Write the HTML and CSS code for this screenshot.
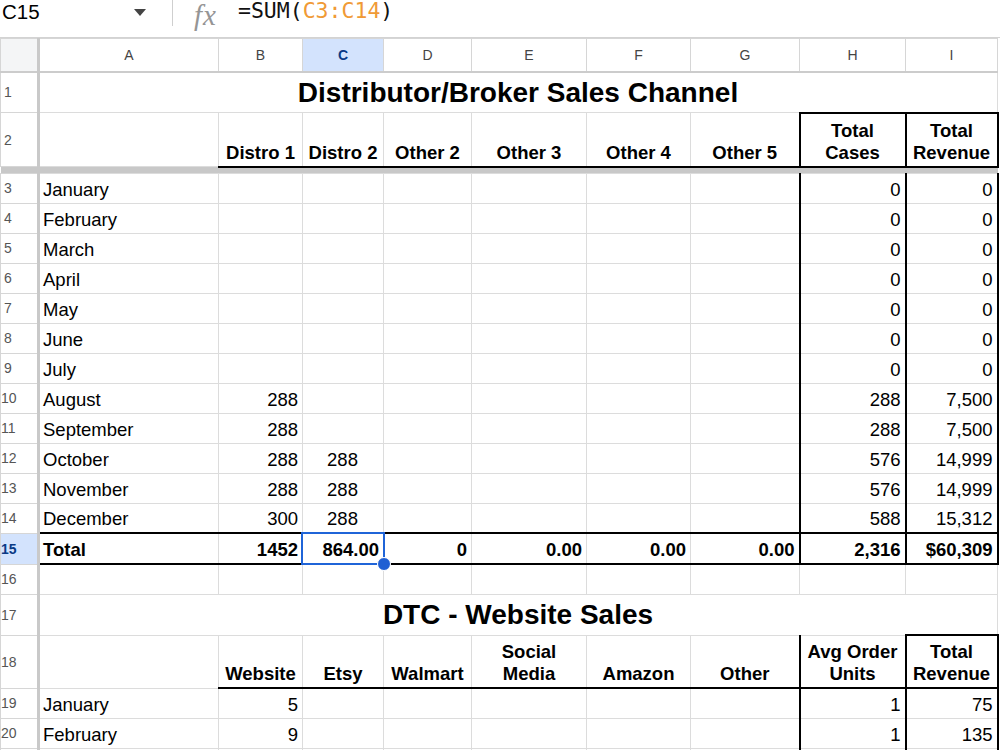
FILE: index.html
```html
<!DOCTYPE html>
<html lang="en">
<head>
    <meta charset="UTF-8">
    <title>Sales Channels</title>
    <link rel="stylesheet" href="styles.css">
</head>
<body>
    <div class="formula-bar">
        <div class="name-box">
            <span class="cell-ref">C15</span>
            <span class="caret"></span>
        </div>
        <div class="fx">fx</div>
        <div class="formula">=SUM(<span class="range">C3:C14</span>)</div>
    </div>

    <table class="sheet">
        <colgroup>
            <col class="c-rh"><col class="c-a"><col class="c-b"><col class="c-c"><col class="c-d">
            <col class="c-e"><col class="c-f"><col class="c-g"><col class="c-h"><col class="c-i">
        </colgroup>
        <tr class="col-hdr">
            <th class="corner"></th>
            <th>A</th><th>B</th><th class="active">C</th><th>D</th><th>E</th><th>F</th><th>G</th><th>H</th><th>I</th>
        </tr>

        <!-- distributor / broker block -->
        <tr class="r-title">
            <td class="rh"><span>1</span></td>
            <td colspan="9" class="title">Distributor/Broker Sales Channel</td>
        </tr>
        <tr class="r-head">
            <td class="rh"><span>2</span></td>
            <td></td>
            <td class="hd bb">Distro 1</td>
            <td class="hd bb">Distro 2</td>
            <td class="hd bb">Other 2</td>
            <td class="hd bb">Other 3</td>
            <td class="hd bb">Other 4</td>
            <td class="hd bb">Other 5</td>
            <td class="hd bb bt bl">Total<br>Cases</td>
            <td class="hd bb bt bl br">Total<br>Revenue</td>
        </tr>
        <tr class="frozen"><td colspan="10"></td></tr>
        <tr><td class="rh"><span>3</span></td><td>January</td><td></td><td></td><td></td><td></td><td></td><td></td><td class="num bl">0</td><td class="num bl br">0</td></tr>
        <tr><td class="rh"><span>4</span></td><td>February</td><td></td><td></td><td></td><td></td><td></td><td></td><td class="num bl">0</td><td class="num bl br">0</td></tr>
        <tr><td class="rh"><span>5</span></td><td>March</td><td></td><td></td><td></td><td></td><td></td><td></td><td class="num bl">0</td><td class="num bl br">0</td></tr>
        <tr><td class="rh"><span>6</span></td><td>April</td><td></td><td></td><td></td><td></td><td></td><td></td><td class="num bl">0</td><td class="num bl br">0</td></tr>
        <tr><td class="rh"><span>7</span></td><td>May</td><td></td><td></td><td></td><td></td><td></td><td></td><td class="num bl">0</td><td class="num bl br">0</td></tr>
        <tr><td class="rh"><span>8</span></td><td>June</td><td></td><td></td><td></td><td></td><td></td><td></td><td class="num bl">0</td><td class="num bl br">0</td></tr>
        <tr><td class="rh"><span>9</span></td><td>July</td><td></td><td></td><td></td><td></td><td></td><td></td><td class="num bl">0</td><td class="num bl br">0</td></tr>
        <tr><td class="rh"><span>10</span></td><td>August</td><td class="num">288</td><td></td><td></td><td></td><td></td><td></td><td class="num bl">288</td><td class="num bl br">7,500</td></tr>
        <tr><td class="rh"><span>11</span></td><td>September</td><td class="num">288</td><td></td><td></td><td></td><td></td><td></td><td class="num bl">288</td><td class="num bl br">7,500</td></tr>
        <tr><td class="rh"><span>12</span></td><td>October</td><td class="num">288</td><td class="mid">288</td><td></td><td></td><td></td><td></td><td class="num bl">576</td><td class="num bl br">14,999</td></tr>
        <tr><td class="rh"><span>13</span></td><td>November</td><td class="num">288</td><td class="mid">288</td><td></td><td></td><td></td><td></td><td class="num bl">576</td><td class="num bl br">14,999</td></tr>
        <tr><td class="rh"><span>14</span></td><td>December</td><td class="num">300</td><td class="mid">288</td><td></td><td></td><td></td><td></td><td class="num bl">588</td><td class="num bl br">15,312</td></tr>
        <tr class="r-total">
            <td class="rh active"><span>15</span></td>
            <td class="bt bb">Total</td>
            <td class="num bt bb">1452</td>
            <td class="num bt bb sel">864.00</td>
            <td class="num bt bb">0</td>
            <td class="num bt bb">0.00</td>
            <td class="num bt bb">0.00</td>
            <td class="num bt bb">0.00</td>
            <td class="num bt bb bl">2,316</td>
            <td class="num bt bb bl br">$60,309</td>
        </tr>
        <tr><td class="rh"><span>16</span></td><td></td><td></td><td></td><td></td><td></td><td></td><td></td><td></td><td></td></tr>

        <!-- direct to consumer block -->
        <tr class="r-title">
            <td class="rh"><span>17</span></td>
            <td colspan="9" class="title">DTC - Website Sales</td>
        </tr>
        <tr class="r-head r-head-dtc">
            <td class="rh"><span>18</span></td>
            <td></td>
            <td class="hd bb">Website</td>
            <td class="hd bb">Etsy</td>
            <td class="hd bb">Walmart</td>
            <td class="hd bb">Social<br>Media</td>
            <td class="hd bb">Amazon</td>
            <td class="hd bb">Other</td>
            <td class="hd bb bl">Avg Order<br>Units</td>
            <td class="hd bb bt bl br">Total<br>Revenue</td>
        </tr>
        <tr><td class="rh"><span>19</span></td><td>January</td><td class="num">5</td><td></td><td></td><td></td><td></td><td></td><td class="num bl">1</td><td class="num bl br">75</td></tr>
        <tr><td class="rh"><span>20</span></td><td>February</td><td class="num">9</td><td></td><td></td><td></td><td></td><td></td><td class="num bl">1</td><td class="num bl br">135</td></tr>
        <tr><td class="rh"></td><td></td><td></td><td></td><td></td><td></td><td></td><td></td><td class="bl"></td><td class="bl br"></td></tr>
    </table>
</body>
</html>
```

FILE: styles.css
```css
html, body {
    margin: 0;
    padding: 0;
    background: #fff;
    overflow: hidden;
}
body {
    width: 1000px;
    height: 750px;
    font-family: "Liberation Sans", Arial, sans-serif;
    color: #000;
}

/* formula bar */
.formula-bar {
    display: flex;
    align-items: flex-start;
    height: 37px;
    border-bottom: 1px solid #d3d3d3;
}
.name-box {
    display: flex;
    align-items: center;
    justify-content: space-between;
    width: 144px;
    height: 26px;
    padding: 0 26px 0 2px;
    border-right: 1.5px solid #cfcfcf;
}
.cell-ref {
    font-size: 20.5px;
    line-height: 22px;
    margin-top: -3px;
}
.caret {
    width: 0;
    height: 0;
    border-left: 6px solid transparent;
    border-right: 6px solid transparent;
    border-top: 7px solid #444;
    margin-top: -2px;
}
.fx {
    margin-left: 19px;
    padding: 0 4px 0 2px;
    font-family: "Liberation Serif", serif;
    font-style: italic;
    font-size: 29px;
    line-height: 30px;
    letter-spacing: 1px;
    color: #959595;
}
.formula {
    margin-left: 17px;
    font-family: "DejaVu Sans Mono", monospace;
    font-size: 21.5px;
    line-height: 22px;
    color: #111;
}
.range {
    color: #f09a36;
}

/* grid */
.sheet {
    border-collapse: collapse;
    table-layout: fixed;
    width: 997px;
    font-size: 18.5px;
}
.c-rh { width: 38px; }
.c-a { width: 180px; }
.c-b { width: 84px; }
.c-c { width: 81px; }
.c-d { width: 88px; }
.c-e { width: 115px; }
.c-f { width: 104px; }
.c-g { width: 109px; }
.c-h { width: 106px; }
.c-i { width: 92px; }

.sheet td {
    border: 1px solid #dcdcdc;
    padding: 0 4px 2px 3px;
    line-height: 22px;
    vertical-align: bottom;
    white-space: nowrap;
    overflow: visible;
}
.sheet tr {
    height: 30px;
}

.sheet tr.col-hdr {
    height: 33px;
}
.col-hdr th {
    font-weight: normal;
    font-size: 14px;
    color: #444;
    border: 1px solid #d6d6d6;
    border-bottom: 2px solid #cccccc;
    padding: 0;
}
.col-hdr th.corner {
    background: #f4f5f6;
    border-right: 3px solid #c9c9c9;
}
.col-hdr th.active {
    background: #d3e3fd;
    color: #0a3a85;
    font-weight: bold;
}

.sheet td.rh {
    border-color: #d6d6d6;
    border-right: 3px solid #c9c9c9;
    font-size: 14px;
    color: #555;
    padding: 0;
    vertical-align: middle;
    line-height: 16px;
}
.rh span {
    display: inline-block;
    width: 14px;
    text-align: center;
}
.sheet td.rh.active {
    background: #d3e3fd;
    color: #0a3a85;
    font-weight: bold;
}

.sheet tr.r-title {
    height: 41px;
}
.sheet td.title {
    text-align: center;
    font-weight: bold;
    font-size: 28px;
    line-height: 32px;
    padding-bottom: 3px;
}
.sheet tr.r-head {
    height: 54px;
}
.sheet tr.r-head-dtc {
    height: 53px;
}
.sheet td.hd {
    text-align: center;
    font-weight: bold;
    padding: 0 2px 2px;
}
.sheet tr.frozen {
    height: 5px;
}
.sheet .frozen td {
    height: 5px;
    padding: 0;
    background: #c8c8c8;
    border: none;
    line-height: 0;
    font-size: 0;
}

.num { text-align: right; }
.mid { text-align: center; }

.sheet tr.r-total {
    height: 31px;
}
.r-total td {
    font-weight: bold;
}

/* black borders */
.sheet td.bl { border-left: 2px solid #000; }
.sheet td.br { border-right: 2px solid #000; }
.sheet td.bt { border-top: 2px solid #000; }
.sheet td.bb { border-bottom: 2px solid #000; }

/* active cell */
.sheet td.sel {
    position: relative;
}
.sel::after {
    content: "";
    position: absolute;
    left: -2px;
    top: -2px;
    right: -2px;
    bottom: -2px;
    border: 2px solid #1f64d8;
}
.sel::before {
    content: "";
    position: absolute;
    right: -8px;
    bottom: -8px;
    width: 12px;
    height: 12px;
    border-radius: 50%;
    background: #1f5fd3;
    border: 1px solid #fff;
    z-index: 2;
}
```
